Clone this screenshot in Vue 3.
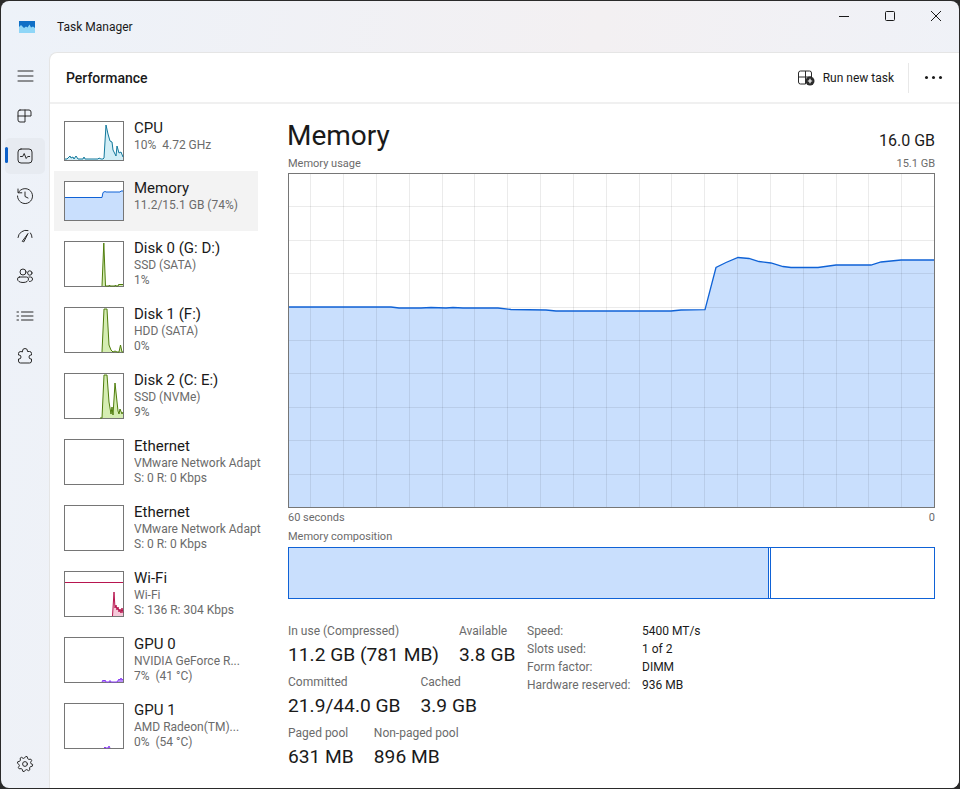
<script setup>
const navTop = [
  { id: "menu", d: "M3 5h15M3 10h15M3 15h15" },
  { id: "processes", d: "M5 4h9a2 2 0 0 1 2 2v4h-6v6H5a2 2 0 0 1-2-2V6a2 2 0 0 1 2-2zM10 4v6M3 10h7" },
  { id: "performance", d: "M6 3h8a3 3 0 0 1 3 3v8a3 3 0 0 1-3 3H6a3 3 0 0 1-3-3V6a3 3 0 0 1 3-3zM5.5 10.5h2.2l1.5-3 2 5 1.5-2h2", active: true },
  { id: "history", d: "M3.4 6.5A7.5 7.5 0 1 1 2.5 10M3 3v3.8h3.8M10 6v4.5l3 1.5" },
  { id: "startup", d: "M3 11.500A8 8 0 0 1 13 4.500M15.500 7A8 8 0 0 1 17 11.500M7.500 15L13 7.500 9 15.500z" },
  { id: "users", d: "M11 6a3 3 0 1 1-6 0 3 3 0 0 1 6 0zM4.5 11h7a2 2 0 0 1 2 2c0 2-2 3.5-5.5 3.5S2.5 15 2.5 13a2 2 0 0 1 2-2zM17 7a2.2 2.2 0 1 1-4.4 0 2.2 2.2 0 0 1 4.4 0zM14.5 15.5c2 0 3-1 3-2.5a2 2 0 0 0-2-2h-1.5" },
  { id: "details", d: "M6.5 6H18M6.5 10H18M6.5 14H18M2 6h1.5M2 10h1.5M2 14h1.5" },
  { id: "services", d: "M7.5 5.5V5a2.5 2.5 0 0 1 5 0v.5h2a2 2 0 0 1 2 2V9h-.5a2 2 0 0 0 0 4h.5v2a2 2 0 0 1-2 2h-9a2 2 0 0 1-2-2v-2H4a2 2 0 0 0 0-4h-.5V7.5a2 2 0 0 1 2-2z" },
];

function gearPath() {
  const pts = [];
  for (let i = 0; i < 32; i++) {
    const a = (i / 32) * Math.PI * 2;
    const r = i % 4 < 2 ? 7.6 : 5.9;
    pts.push((10 + r * Math.cos(a + 0.1)).toFixed(1) + " " + (10 + r * Math.sin(a + 0.1)).toFixed(1));
  }
  return "M" + pts.join("L") + "zM12.4 10a2.4 2.4 0 1 1-4.8 0 2.4 2.4 0 0 1 4.8 0z";
}
const gear = gearPath();

const cpuColor = { stroke: "#13799c", fill: "#d2eef6" };
const memColor = { stroke: "#0f62d6", fill: "#c9dffd" };
const diskColor = { stroke: "#4f7d0c", fill: "#d5edb2" };
const netColor = { stroke: "#b7154f", fill: "#f5c9d9" };
const gpuColor = { stroke: "#8a3cf5", fill: "#b98afa" };

const devices = [
  { name: "CPU", sub: "10%  4.72 GHz", h: 38, ...cpuColor,
    line: "0,37 2,37 3,36 5,34 6,36 8,35 9,37 11,34 13,37 15,37 18,37 19,35 20,37 30,37 33,37 34,36 36,37 38,37 39,36 41,3 43,12 45,19 47,20 48,28 51,34 52,24 54,31 56,30 58,35" },
  { name: "Memory", sub: "11.2/15.1 GB (74%)", h: 38, selected: true, ...memColor,
    line: "0,15.5 37,15.5 38,10.5 40,9.5 41,10 55,10 56,9 58,9" },
  { name: "Disk 0 (G: D:)", sub: "SSD (SATA)", sub2: "1%", h: 44, ...diskColor,
    line: "37,44 38.8,1 40.5,44 44,44 44.5,43 45,44 50,44 50.5,43 51,44 53,44 54,42 55,43 56,42 57,43 58,42" },
  { name: "Disk 1 (F:)", sub: "HDD (SATA)", sub2: "0%", h: 44, ...diskColor,
    line: "37,44 39,1 42,1 44,37 46,42 48,44 50,43 52,44 54,44 55.5,37 57,44 58,44" },
  { name: "Disk 2 (C: E:)", sub: "SSD (NVMe)", sub2: "9%", h: 44, ...diskColor,
    line: "35,44 37,44 39,1 42,1 44,28 46,40 47,33 48,41 50,9 53,37 54,40 55,35 57,40 58,38" },
  { name: "Ethernet", sub: "VMware Network Adapt", sub2: "S: 0 R: 0 Kbps", h: 44, ...netColor, line: "" },
  { name: "Ethernet", sub: "VMware Network Adapt", sub2: "S: 0 R: 0 Kbps", h: 44, ...netColor, line: "" },
  { name: "Wi-Fi", sub: "Wi-Fi", sub2: "S: 136 R: 304 Kbps", h: 44, top: 10.5, ...netColor,
    line: "47.5,44 49,20 50,36 51,33 52,38 53,35 54,40 55,37 56,41 57,36 58,41" },
  { name: "GPU 0", sub: "NVIDIA GeForce R...", sub2: "7%  (41 °C)", h: 44, ...gpuColor,
    line: "37,44 38,42 39,43 40,42 41,44 44,44 45,42.5 46,44 52,44 54,41 55,42 56,40 57,42 58,41" },
  { name: "GPU 1", sub: "AMD Radeon(TM)...", sub2: "0%  (54 °C)", h: 44, ...gpuColor,
    line: "39,44 40,43 41,44 43,44 44,42 45,44" },
];

function areaOf(d) {
  const pts = d.line.split(" ");
  const startX = pts[0].split(",")[0];
  const endX = pts[pts.length - 1].split(",")[0];
  return startX + "," + d.h + " " + d.line + " " + endX + "," + d.h;
}

// big chart, inner box is 645x333, coordinates below are relative to it
const usage = [
  [0, 133], [102, 133], [110, 134], [132, 134], [142, 133.5], [157, 134], [164, 133.5], [174, 134],
  [209, 134], [222, 135.5], [257, 136], [267, 137], [382, 137], [392, 136], [416, 135.7], [427, 93.5],
  [437, 88.5], [449, 83.5], [460, 84.5], [470, 87.5], [482, 89], [494, 92.5], [502, 93.5], [529, 93.5],
  [547, 91], [582, 91], [592, 88], [612, 86], [645, 86],
];
const usageLine = usage.map((p) => p.join(",")).join(" ");
const usageArea = "0,333 " + usageLine + " 645,333";
const gridX = Array.from({ length: 20 }, (_, i) => Math.round(21.3 + 32.83 * i) + 0.5);
const gridY = Array.from({ length: 9 }, (_, i) => Math.round(33.4 * (i + 1)) - 0.5);

const statRows = [
  [
    { label: "In use (Compressed)", value: "11.2 GB (781 MB)" },
    { label: "Available", value: "3.8 GB" },
  ],
  [
    { label: "Committed", value: "21.9/44.0 GB" },
    { label: "Cached", value: "3.9 GB" },
  ],
  [
    { label: "Paged pool", value: "631 MB" },
    { label: "Non-paged pool", value: "896 MB" },
  ],
];
const specs = [
  { label: "Speed:", value: "5400 MT/s" },
  { label: "Slots used:", value: "1 of 2" },
  { label: "Form factor:", value: "DIMM" },
  { label: "Hardware reserved:", value: "936 MB" },
];
</script>

<template>
  <div class="window">
    <header class="titlebar">
      <svg class="app-icon" width="16" height="12" viewBox="0 0 16 12">
        <rect width="16" height="12" fill="#8fd6f7" />
        <path d="M0 0h16v7l-2-1.5-2 1-1.5-3-2 3-1.5-1-2 1.500L2 4 0 6z" fill="#0f6fc6" />
      </svg>
      <span class="app-title">Task Manager</span>
      <div class="controls">
        <button class="ctl">
          <svg width="12" height="12" viewBox="0 0 12 12"><path d="M1 6.500h10" /></svg>
        </button>
        <button class="ctl">
          <svg width="12" height="12" viewBox="0 0 12 12"><rect x="1.500" y="1.500" width="9" height="9" rx="1" /></svg>
        </button>
        <button class="ctl">
          <svg width="12" height="12" viewBox="0 0 12 12"><path d="M1 1l10 10M11 1L1 11" /></svg>
        </button>
      </div>
    </header>

    <div class="body">
      <nav class="nav">
        <div v-for="item in navTop" :key="item.id" class="nav-item" :class="{ active: item.active }">
          <svg width="20" height="20" viewBox="0 0 20 20"><path :d="item.d" /></svg>
        </div>
        <div class="nav-item nav-settings">
          <svg width="20" height="20" viewBox="0 0 20 20"><path :d="gear" /></svg>
        </div>
      </nav>

      <main class="content">
        <div class="page-head">
          <h1 class="page-title">Performance</h1>
          <button class="run-task">
            <svg width="18" height="16" viewBox="0 0 18 16">
              <path class="run-outline" d="M2.500 1h9a2 2 0 0 1 2 2v4h-6v7h-5a2 2 0 0 1-2-2V3a2 2 0 0 1 2-2zM7.500 1v6M.5 7h7" />
              <circle cx="12" cy="11" r="4.500" fill="#2b2b2b" />
              <path d="M12 8.800v4.400M9.800 11h4.400" stroke="#fff" stroke-width="1.200" />
            </svg>
            <span>Run new task</span>
          </button>
          <span class="head-sep"></span>
          <div class="more"><i></i><i></i><i></i></div>
        </div>

        <div class="panel">
          <div class="devices">
            <div v-for="(d, i) in devices" :key="i" class="device" :class="{ selected: d.selected }">
              <svg class="thumb" width="60" :height="d.h + 2" :viewBox="'-1 -1 60 ' + (d.h + 2)">
                <rect x="-0.500" y="-0.500" width="59" :height="d.h + 1" fill="#fff" stroke="#767676" />
                <template v-if="d.line">
                  <polygon :points="areaOf(d)" :fill="d.fill" />
                  <polyline :points="d.line" fill="none" :stroke="d.stroke" stroke-width="1" />
                </template>
                <path v-if="d.top" :d="'M0 ' + d.top + 'H58'" fill="none" :stroke="d.stroke" stroke-width="1" />
              </svg>
              <div class="device-text">
                <div class="device-name">{{ d.name }}</div>
                <div class="device-sub">{{ d.sub }}</div>
                <div v-if="d.sub2" class="device-sub">{{ d.sub2 }}</div>
              </div>
            </div>
          </div>

          <section class="detail">
            <div class="detail-head">
              <h2 class="detail-title">Memory</h2>
              <span class="detail-total">16.0 GB</span>
            </div>
            <div class="caption chart-caption">
              <span>Memory usage</span>
              <span>15.1 GB</span>
            </div>
            <div class="chart">
              <svg width="645" height="333" viewBox="0 0 645 333">
                <polygon :points="usageArea" fill="#c9dffd" />
                <path v-for="x in gridX" :key="'x' + x" :d="'M' + x + ' 0V333'" class="grid" />
                <path v-for="y in gridY" :key="'y' + y" :d="'M0 ' + y + 'H645'" class="grid" />
                <polyline :points="usageLine" fill="none" stroke="#0f62d6" stroke-width="1.300" />
              </svg>
            </div>
            <div class="caption axis-caption">
              <span>60 seconds</span>
              <span>0</span>
            </div>
            <div class="caption comp-caption">
              <span>Memory composition</span>
            </div>
            <div class="composition">
              <div class="comp-used"></div>
              <div class="comp-free"></div>
            </div>

            <div class="stats">
              <div class="stats-left">
                <div v-for="(row, r) in statRows" :key="r" class="stat-row">
                  <div v-for="s in row" :key="s.label" class="stat">
                    <div class="stat-label">{{ s.label }}</div>
                    <div class="stat-value">{{ s.value }}</div>
                  </div>
                </div>
              </div>
              <div class="specs">
                <template v-for="s in specs" :key="s.label">
                  <span class="spec-label">{{ s.label }}</span>
                  <span class="spec-value">{{ s.value }}</span>
                </template>
              </div>
            </div>
          </section>
        </div>
      </main>
    </div>
  </div>
</template>

<style>
html,
body {
  margin: 0;
  height: 100%;
  background: #2a2a2a;
  overflow: hidden;
}
</style>

<style scoped>
.window {
  width: 958px;
  height: 787px;
  margin: 1px 0 0 1px;
  display: flex;
  flex-direction: column;
  border-radius: 8px;
  overflow: hidden;
  background: linear-gradient(100deg, #edf2f9 0%, #f3f0f2 55%, #eef2f9 100%);
  font-family: Roboto, "Liberation Sans", sans-serif;
  color: #1a1a1a;
}

.titlebar {
  height: 51px;
  flex: none;
  display: flex;
  align-items: center;
  padding-left: 18px;
}

.app-icon {
  margin-right: 22px;
}

.app-title {
  font-size: 12px;
}

.controls {
  margin-left: auto;
  align-self: flex-start;
  display: flex;
}

.ctl {
  width: 46px;
  height: 29px;
  padding: 0;
  border: none;
  background: none;
  display: flex;
  align-items: center;
  justify-content: center;
}

.ctl svg {
  fill: none;
  stroke: #1a1a1a;
  stroke-width: 1;
}

.body {
  flex: 1;
  min-height: 0;
  display: flex;
}

.nav {
  width: 48px;
  flex: none;
  box-sizing: border-box;
  padding: 6px 4px 6px;
  display: flex;
  flex-direction: column;
  gap: 4px;
}

.nav-item {
  position: relative;
  width: 40px;
  height: 36px;
  flex: none;
  border-radius: 5px;
  display: flex;
  align-items: center;
  justify-content: center;
}

.nav-item svg {
  fill: none;
  stroke: #2a2a2a;
  stroke-width: 1;
  stroke-linecap: round;
  stroke-linejoin: round;
}

.nav-item.active {
  background: #e7ebf1;
}

.nav-item.active::before {
  content: "";
  position: absolute;
  left: 0;
  top: 9px;
  width: 3px;
  height: 16px;
  border-radius: 2px;
  background: #0a5fc8;
}

.nav-settings {
  margin-top: auto;
}

.content {
  flex: 1;
  min-width: 0;
  display: flex;
  flex-direction: column;
  background: #fff;
  border-top: 1px solid #e5e5e5;
  border-left: 1px solid #e5e5e5;
  border-top-left-radius: 8px;
}

.page-head {
  height: 51px;
  flex: none;
  box-sizing: border-box;
  display: flex;
  align-items: center;
  padding: 0 17px 0 16px;
  border-bottom: 2px solid #f0f0f0;
}

.page-title {
  margin: 0;
  font-size: 14px;
  font-weight: 500;
}

.run-task {
  margin-left: auto;
  padding: 0;
  border: none;
  background: none;
  display: flex;
  align-items: center;
  gap: 7px;
  font: inherit;
  font-size: 12px;
  color: #1a1a1a;
}

.run-outline {
  fill: none;
  stroke: #2b2b2b;
  stroke-width: 1;
}

.head-sep {
  width: 1px;
  height: 30px;
  margin: 0 16px 0 14px;
  background: #e8e8e8;
}

.more {
  display: flex;
  gap: 4px;
}

.more i {
  width: 3px;
  height: 3px;
  border-radius: 50%;
  background: #1a1a1a;
}

.panel {
  flex: 1;
  min-height: 0;
  display: flex;
}

.devices {
  width: 204px;
  flex: none;
  margin-left: 4px;
  padding-top: 7px;
}

.device {
  display: flex;
  align-items: flex-start;
  gap: 10px;
  padding: 10px;
}

.device.selected {
  background: #f3f3f3;
}

.thumb {
  flex: none;
  display: block;
}

.device-text {
  margin: -3px 0 -3px;
  width: 128px;
  flex: none;
  overflow: hidden;
  white-space: pre;
}

.device-name {
  font-size: 15px;
  line-height: 20px;
}

.device-sub {
  font-size: 12px;
  line-height: 15px;
  color: #6b6b6b;
}

.detail {
  flex: 1;
  min-width: 0;
  padding: 14px 24px 0 30px;
}

.detail-head {
  display: flex;
  justify-content: space-between;
  align-items: flex-end;
}

.detail-title {
  margin: 0 0 0 -1px;
  font-size: 28px;
  font-weight: 400;
  line-height: 36px;
}

.detail-total {
  font-size: 16px;
  line-height: 26px;
}

.caption {
  display: flex;
  justify-content: space-between;
  font-size: 11px;
  line-height: 16px;
  color: #6b6b6b;
}

.chart-caption {
  margin-top: 2px;
  margin-bottom: 1px;
}

.chart {
  width: 645px;
  height: 333px;
  border: 1px solid #767676;
}

.chart svg {
  display: block;
}

.grid {
  stroke: rgba(0, 0, 0, 0.08);
  stroke-width: 1;
}

.axis-caption {
  margin-top: 2px;
}

.comp-caption {
  margin-top: 3px;
  margin-bottom: 2px;
}

.composition {
  height: 50px;
  display: flex;
  border: 1px solid #0f62d6;
}

.comp-used {
  width: 479px;
  flex: none;
  background: #c9dffd;
  border-right: 1px solid #0f62d6;
}

.comp-free {
  flex: 1;
  margin-left: 1px;
  border-left: 1px solid #0f62d6;
}

.stats {
  margin-top: 24px;
  display: flex;
}

.stats-left {
  width: 239px;
  flex: none;
}

.stat-row {
  display: flex;
  gap: 20px;
  margin-bottom: 6px;
}

.stat-label {
  font-size: 12px;
  line-height: 16px;
  color: #6b6b6b;
}

.stat-value {
  margin-top: 3px;
  font-size: 19.2px;
  line-height: 26px;
}

.specs {
  display: grid;
  grid-template-columns: 115px auto;
  grid-auto-rows: 18px;
  align-content: start;
  align-items: center;
  justify-content: start;
  margin-top: -1px;
  font-size: 12px;
}

.spec-label {
  color: #6b6b6b;
}
</style>
